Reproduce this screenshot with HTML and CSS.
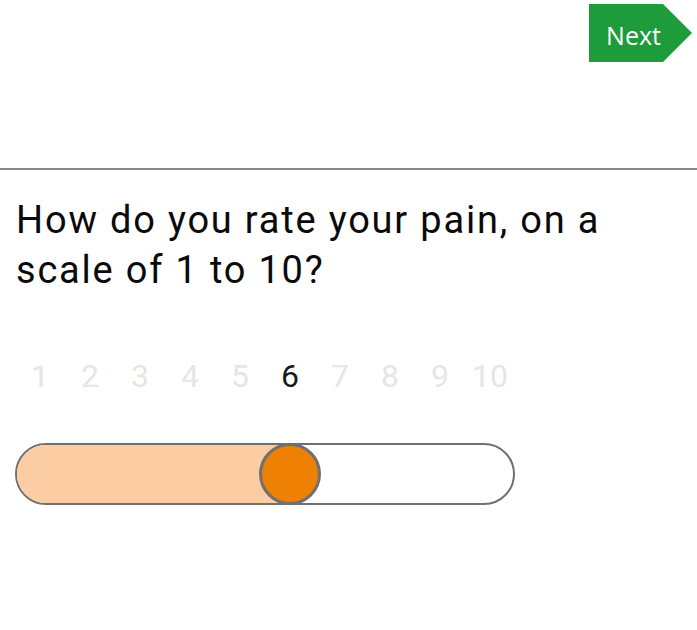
FILE: index.html
```html
<!DOCTYPE html>
<html>
<head>
<meta charset="utf-8">
<link rel="stylesheet" href="styles.css">
</head>
<body>
<header class="top">
  <button class="next">Next</button>
</header>
<hr class="divider">
<main class="content">
  <h1 class="question">How do you rate your pain, on a scale of 1 to 10?</h1>
  <div class="scale">
    <div class="labels">
      <span class="label">1</span>
      <span class="label">2</span>
      <span class="label">3</span>
      <span class="label">4</span>
      <span class="label">5</span>
      <span class="label active">6</span>
      <span class="label">7</span>
      <span class="label">8</span>
      <span class="label">9</span>
      <span class="label">10</span>
    </div>
    <div class="track">
      <div class="fill" style="width: 55%"></div>
      <div class="thumb" style="left: 55%"></div>
    </div>
  </div>
</main>
</body>
</html>
```
FILE: styles.css
```css
html, body {
  margin: 0;
  padding: 0;
  background: #ffffff;
}
body {
  font-family: Roboto, "Liberation Sans", sans-serif;
  color: #111111;
}
.top {
  display: flex;
  justify-content: flex-end;
  padding: 4px 5px 0 0;
  height: 164px;
  box-sizing: content-box;
}
.next {
  width: 103px;
  height: 58px;
  border: none;
  margin: 0;
  padding: 3px 29px 0 15px;
  background: #1e9b3b;
  color: #ffffff;
  font-family: "Open Sans", "Noto Sans", sans-serif;
  font-size: 25px;
  clip-path: polygon(0 0, 74px 0, 103px 50%, 74px 100%, 0 100%);
  box-sizing: border-box;
  text-align: center;
  white-space: nowrap;
}
.divider {
  margin: 0;
  border: none;
  height: 2px;
  background: #888888;
}
.content {
  padding: 25px 0 0 15px;
}
.question {
  margin: 0;
  padding-left: 1px;
  font-size: 38px;
  font-weight: 400;
  line-height: 50px;
  letter-spacing: 1.8px;
  color: #0a0a0a;
  width: 640px;
}
.scale {
  width: 500px;
  margin-top: 63px;
}
.labels {
  display: flex;
  font-size: 32px;
  line-height: 37px;
  color: #e6e6e6;
}
.label {
  flex: 0 0 50px;
  text-align: center;
}
.label.active {
  color: #1a1a1a;
}
.track {
  position: relative;
  margin-top: 48px;
  height: 62px;
  border: 2.5px solid #707070;
  border-radius: 31px;
  box-sizing: border-box;
  background: #ffffff;
}
.fill {
  height: 100%;
  background: #fccca2;
  border-radius: 29px 0 0 29px;
}
.thumb {
  position: absolute;
  top: -2.5px;
  width: 62px;
  height: 62px;
  margin-left: -31px;
  border: 3px solid #707070;
  border-radius: 50%;
  background: #ee8004;
  box-sizing: border-box;
}
```
